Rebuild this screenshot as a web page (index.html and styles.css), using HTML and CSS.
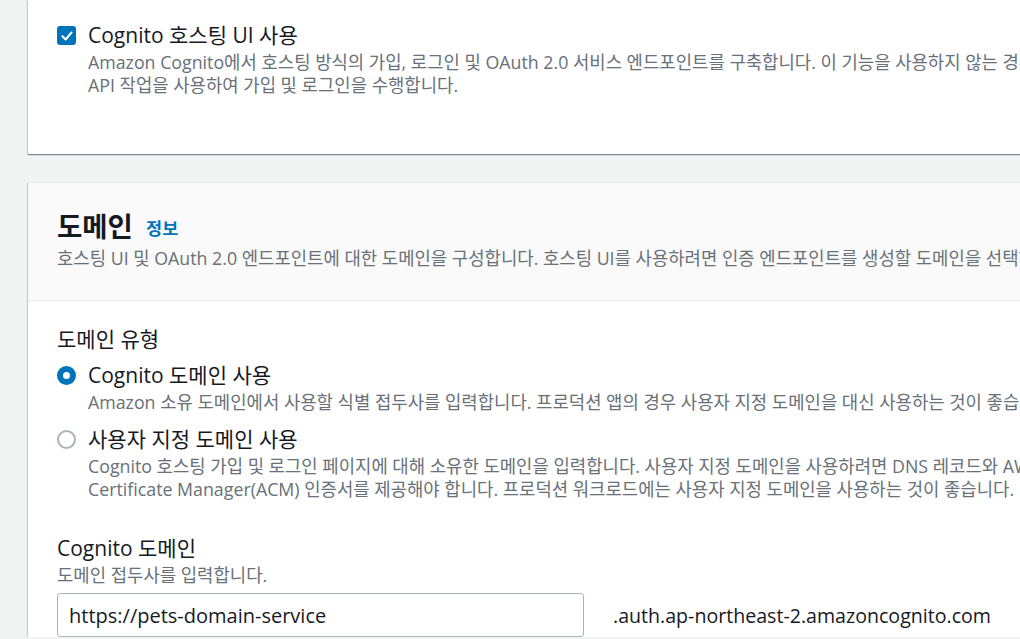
FILE: index.html
```html
<!DOCTYPE html>
<html lang="ko">
<head>
<meta charset="UTF-8" />
<meta name="viewport" content="width=device-width, initial-scale=1" />
<title>Cognito 앱 통합</title>
<link rel="stylesheet" href="styles.css">
</head>
<body>

<div class="page">

  <!-- 호스팅 UI -->
  <div class="card card-top">
    <div class="card-body">
      <label class="option">
        <span class="checkbox checked">
          <svg viewBox="0 0 20 20" width="14" height="14"><path d="M3.5 10.5 L8 15 L16.5 5" fill="none" stroke="#fff" stroke-width="3" stroke-linecap="round" stroke-linejoin="round"/></svg>
        </span>
        <span class="option-text">
          <span class="option-label">Cognito 호스팅 UI 사용</span>
          <span class="desc">Amazon Cognito에서 호스팅 방식의 가입, 로그인 및 OAuth 2.0 서비스 엔드포인트를 구축합니다. 이 기능을 사용하지 않는 경우<br>API 작업을 사용하여 가입 및 로그인을 수행합니다.</span>
        </span>
      </label>
    </div>
  </div>

  <!-- 도메인 -->
  <div class="card">
    <div class="card-header">
      <h2>도메인 <a href="#" class="info">정보</a></h2>
      <p class="desc">호스팅 UI 및 OAuth 2.0 엔드포인트에 대한 도메인을 구성합니다. 호스팅 UI를 사용하려면 인증 엔드포인트를 생성할 도메인을 선택하세요.</p>
    </div>
    <div class="card-body domain-body">
      <div class="field-label">도메인 유형</div>

      <label class="option radio-option">
        <span class="radio checked"></span>
        <span class="option-text">
          <span class="option-label">Cognito 도메인 사용</span>
          <span class="desc">Amazon 소유 도메인에서 사용할 식별 접두사를 입력합니다. 프로덕션 앱의 경우 사용자 지정 도메인을 대신 사용하는 것이 좋습니다.</span>
        </span>
      </label>

      <label class="option radio-option second">
        <span class="radio"></span>
        <span class="option-text">
          <span class="option-label">사용자 지정 도메인 사용</span>
          <span class="desc">Cognito 호스팅 가입 및 로그인 페이지에 대해 소유한 도메인을 입력합니다. 사용자 지정 도메인을 사용하려면 DNS 레코드와 AWS<br>Certificate Manager(ACM) 인증서를 제공해야 합니다. 프로덕션 워크로드에는 사용자 지정 도메인을 사용하는 것이 좋습니다.</span>
        </span>
      </label>

      <div class="field">
        <div class="field-label">Cognito 도메인</div>
        <div class="desc">도메인 접두사를 입력합니다.</div>
        <div class="input-row">
          <input type="text" class="text-input" value="https://pets-domain-service">
          <span class="suffix">.auth.ap-northeast-2.amazoncognito.com</span>
        </div>
      </div>
    </div>
  </div>

</div>

</body>
</html>
```

FILE: styles.css
```css
html, body {
  margin: 0;
  padding: 0;
  overflow: hidden;
}
body {
  background: #f2f3f3;
  color: #16191f;
  font-family: "Open Sans", "Noto Sans CJK KR", sans-serif;
}
.page {
  width: 1400px;
  padding-left: 28px;
}
.card {
  background: #fff;
  border-top: 1px solid #eaeded;
  box-shadow: 0 1px 1px 0 rgba(0,28,36,0.3), 1px 1px 1px 0 rgba(0,28,36,0.15), -1px 1px 1px 0 rgba(0,28,36,0.15);
  margin-top: 28px;
}
.card-top {
  margin-top: 0;
  border-top: none;
  padding-top: 20px;
  padding-bottom: 57px;
}
.card-body {
  padding: 0 29px;
}
.card-header {
  background: #fafafa;
  border-bottom: 1px solid #eaeded;
  padding: 28px 29px 30px;
}
.card-header h2 {
  margin: 0;
  font-size: 27.5px;
  line-height: 31px;
  font-weight: 700;
}
.card-header .desc {
  margin: 3px 0 0;
}
.info {
  color: #0073bb;
  text-decoration: none;
  font-size: 17.5px;
  font-weight: 700;
  margin-left: 6px;
  vertical-align: 2px;
}
.desc {
  display: block;
  color: #687078;
  font-size: 17.8px;
  line-height: 23px;
  white-space: nowrap;
}

/* 체크박스 / 라디오 */
.option {
  display: flex;
  gap: 12px;
  cursor: pointer;
}
.option-text {
  display: flex;
  flex-direction: column;
}
.option-label {
  font-size: 21px;
  line-height: 31px;
}
.checkbox {
  width: 19px;
  height: 19px;
  border-radius: 3px;
  margin-top: 6px;
  flex-shrink: 0;
  display: flex;
  align-items: center;
  justify-content: center;
  box-sizing: border-box;
  border: 2px solid #aab7b8;
}
.checkbox.checked {
  background: #0073bb;
  border-color: #0073bb;
}
.radio {
  width: 19px;
  height: 19px;
  border-radius: 50%;
  margin-top: 6px;
  flex-shrink: 0;
  box-sizing: border-box;
  border: 2px solid #aab7b8;
  background: #fff;
}
.radio.checked {
  border: 6px solid #0073bb;
}

.card-body .field-label {
  font-size: 21px;
  line-height: 31px;
}
.domain-body {
  padding-top: 23px;
}
.radio-option {
  margin-top: 5px;
}
.radio-option.second {
  margin-top: 10px;
}

.field {
  margin-top: 32px;
}
.input-row {
  display: flex;
  align-items: center;
  gap: 29px;
  margin-top: 6px;
}
.text-input {
  width: 527px;
  height: 44px;
  box-sizing: border-box;
  border: 1px solid #aab7b8;
  border-radius: 3px;
  padding: 0 11px;
  font-family: "Open Sans", "Noto Sans CJK KR", sans-serif;
  font-size: 20px;
  color: #16191f;
  background: #fff;
}
.suffix {
  font-size: 19.6px;
  color: #16191f;
}
```
